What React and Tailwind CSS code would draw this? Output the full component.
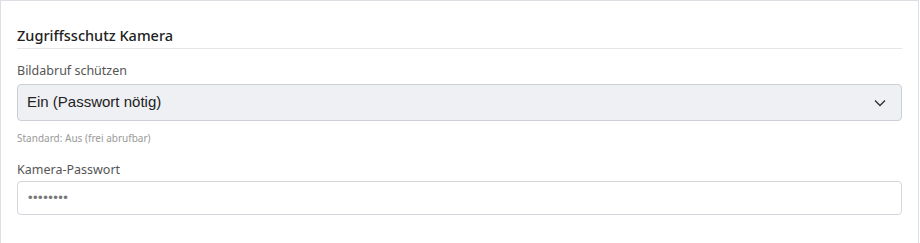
import React from 'react';

const App = () => {
    return (
        <div className="w-[920px] h-[243px] bg-white overflow-hidden" style={{ fontFamily: '"Noto Sans", sans-serif' }}>
            <div className="w-[919px] h-[260px] border border-[#dcdfe4] bg-white pt-[24px] px-[16px]">
                {/* Section heading */}
                <h3 className="text-[14.5px] font-medium text-[#222] leading-[20px] pb-[3px] border-b border-[#e3e5e8]">
                    Zugriffsschutz Kamera
                </h3>

                <div className="mt-[13px]">
                    <label className="block text-[12.5px] text-[#555] leading-[18px] mb-[4px]">Bildabruf schützen</label>
                    <div className="h-[37px] rounded-[4px] border border-[#ccd0d6] bg-[#eef0f4] flex items-center pl-[9px] pr-[14px]">
                        <span className="flex-1 text-[15px] text-[#222]" style={{ fontFamily: '"Liberation Sans", Arial, sans-serif' }}>
                            Ein (Passwort nötig)
                        </span>
                        <svg width="12" height="8" viewBox="0 0 12 8" fill="none" className="mr-[1px]">
                            <path d="M1 1.5L6 6.5L11 1.5" stroke="#333" strokeWidth="1.4" />
                        </svg>
                    </div>
                    <p className="text-[10px] text-[#999] leading-[14px] mt-[10px]">Standard: Aus (frei abrufbar)</p>
                </div>

                <div className="mt-[16px]">
                    <label className="block text-[12.5px] text-[#555] leading-[18px] mb-[2px]">Kamera-Passwort</label>
                    <div className="h-[34px] rounded-[4px] border border-[#d3d6db] bg-white flex items-center pl-[10px]">
                        <span className="text-[#777] text-[13px] tracking-[0.5px]" style={{ fontFamily: '"Liberation Sans", Arial, sans-serif' }}>••••••••</span>
                    </div>
                </div>
            </div>
        </div>
    );
};

export default App;
